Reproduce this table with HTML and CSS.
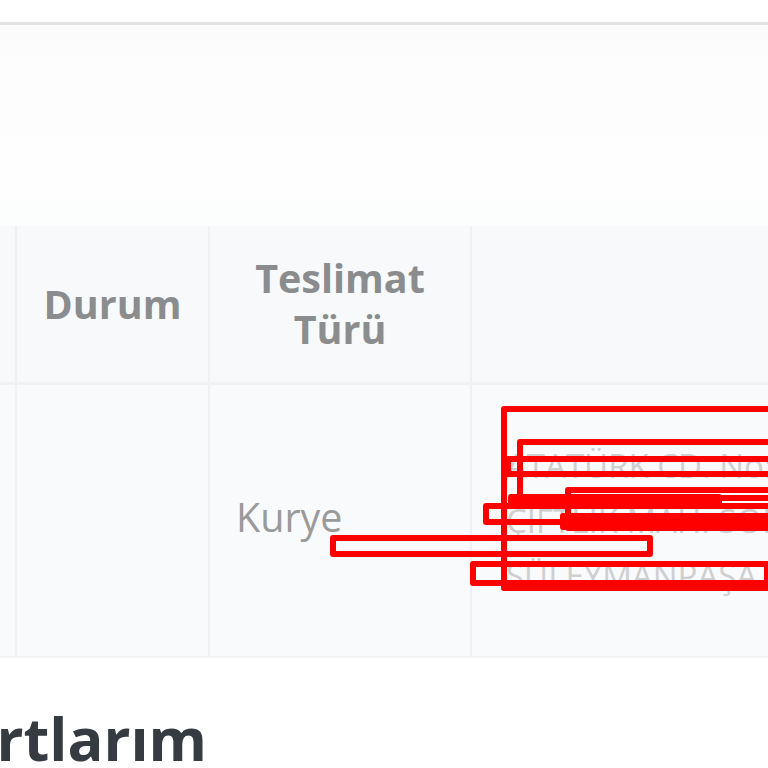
FILE: index.html
```html
<!DOCTYPE html>
<html lang="tr">
<head>
<meta charset="utf-8">
<title>Siparişlerim</title>
<link rel="stylesheet" href="styles.css">
</head>
<body>
<div class="page">
  <div class="topbar"></div>
  <div class="spacer"></div>
  <div class="orders">
    <div class="row head">
      <div class="cell c1"></div>
      <div class="cell c2 th">Durum</div>
      <div class="cell c3 th">Teslimat<br>Türü</div>
      <div class="cell c4 th"></div>
    </div>
    <div class="row body">
      <div class="cell c1"></div>
      <div class="cell c2"></div>
      <div class="cell c3 td">Kurye</div>
      <div class="cell c4 td addr">
        <div class="ln">ATATÜRK CD. No: 12</div>
        <div class="ln">ÇİFTLİK MAH. SOK.</div>
        <div class="ln">SÜLEYMANPAŞA</div>
      </div>
    </div>
  </div>
  <h2 class="section-title">Kartlarım</h2>

  <div class="marks">
    <div class="mark m1"></div>
    <div class="mark m2"></div>
    <div class="mark m3"></div>
    <div class="mark m4"></div>
    <div class="mark m5"></div>
    <div class="mark m6"></div>
    <div class="mark m7"></div>
    <div class="mark m8"></div>
    <div class="mark m9"></div>
  </div>
</div>
</body>
</html>
```

FILE: styles.css
```css
html, body {
  margin: 0;
  padding: 0;
  background: #ffffff;
  overflow: hidden;
}
.page {
  position: relative;
  width: 768px;
  height: 768px;
  overflow: hidden;
  font-family: "Open Sans", "Liberation Sans", sans-serif;
}
.topbar {
  height: 22px;
  background: #ffffff;
  border-bottom: 3px solid #e2e2e2;
}
.spacer {
  height: 201px;
  background: linear-gradient(#fbfbfb, #fdfdfd 40px, #fefefe 160px, #fcfdfd);
}
.orders {
  display: flex;
  flex-direction: column;
}
.row {
  display: grid;
  grid-template-columns: 15px 193px 262px 1fr;
}
.row.head {
  height: 156px;
  background: #f7f9fa;
  border-bottom: 3px solid #f0f2f4;
}
.row.body {
  height: 271px;
  background: #f9fafb;
  border-bottom: 2px solid #f3f4f5;
}
.cell {
  border-left: 2px solid #eef0f2;
  display: flex;
  align-items: center;
  min-width: 0;
}
.cell.c1 {
  border-left: none;
}
.th {
  justify-content: center;
  text-align: center;
  font-weight: 700;
  font-size: 39.5px;
  line-height: 51px;
  color: #8a8c8e;
}
.td {
  font-size: 39.5px;
  line-height: 50px;
  color: #9a9a9a;
  padding-left: 26px;
  padding-bottom: 8px;
}
.addr {
  flex-direction: column;
  align-items: flex-start;
  justify-content: center;
  padding-left: 34px;
  padding-top: 0;
  padding-bottom: 0;
  white-space: nowrap;
  font-size: 33px;
  line-height: 55px;
  color: #cfcfcf;
}
.section-title {
  margin: 44px 0 0 -79px;
  font-size: 59.5px;
  line-height: 72px;
  font-weight: 700;
  color: #363b41;
}
.marks {
  position: absolute;
  inset: 0;
  pointer-events: none;
}
.mark {
  position: absolute;
  border: 6px solid #ff0000;
  border-radius: 3px;
  box-sizing: border-box;
}
.m1 { left: 501px; top: 406px; width: 300px; height: 185px; }
.m2 { left: 517px; top: 439px; width: 300px; height: 62px; }
.m3 { left: 505px; top: 456px; width: 300px; height: 21px; }
.m4 { left: 565px; top: 487px; width: 300px; height: 44px; }
.m5 { left: 508px; top: 494px; width: 214px; height: 12px; background: #ff0000; }
.m6 { left: 483px; top: 503px; width: 300px; height: 22px; }
.m7 { left: 330px; top: 535px; width: 323px; height: 22px; }
.m8 { left: 470px; top: 561px; width: 300px; height: 25px; }
.m9 { left: 560px; top: 513px; width: 300px; height: 17px; background: #ff0000; }
```
